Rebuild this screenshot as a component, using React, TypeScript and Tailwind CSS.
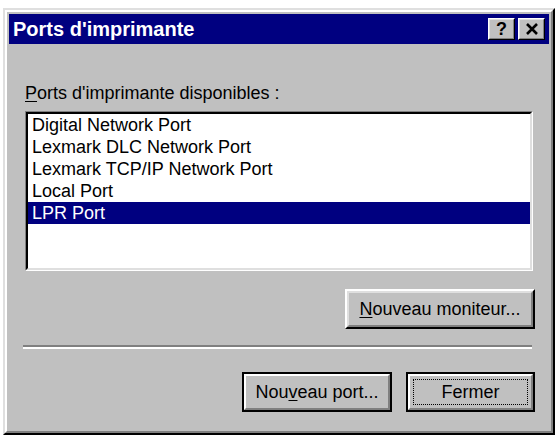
import React from 'react';

const ports = [
  'Digital Network Port',
  'Lexmark DLC Network Port',
  'Lexmark TCP/IP Network Port',
  'Local Port',
  'LPR Port',
];

function TitleButton({ children }: { children: React.ReactNode }) {
  return (
    <div className="w-[27px] h-[22px] bg-[#c0c0c0] border border-t-white border-l-white border-r-black border-b-black">
      <div className="w-full h-full border border-t-[#dfdfdf] border-l-[#dfdfdf] border-r-[#808080] border-b-[#808080] flex items-center justify-center">
        {children}
      </div>
    </div>
  );
}

function Button({
  children,
  width,
  dark,
  focus,
}: {
  children: React.ReactNode;
  width: string;
  dark?: boolean;
  focus?: boolean;
}) {
  const outer = dark
    ? 'border-2 border-black'
    : 'border-2 border-t-white border-l-white border-r-black border-b-black';
  const inner = dark
    ? 'border-2 border-t-white border-l-white border-r-[#808080] border-b-[#808080]'
    : 'border-2 border-t-[#dfdfdf] border-l-[#dfdfdf] border-r-[#808080] border-b-[#808080]';
  return (
    <div className={`${width} h-[40px] bg-[#c0c0c0] ${outer}`}>
      <div className={`w-full h-full ${inner} p-[3px]`}>
        <div
          className={`w-full h-full flex items-center justify-center text-[18px] text-black ${
            focus ? 'border border-dotted border-black' : 'border border-transparent'
          }`}
        >
          {children}
        </div>
      </div>
    </div>
  );
}

export default function App() {
  return (
    <div className="w-[559px] h-[440px] bg-white pt-[8px] pl-[3px] font-['Liberation_Sans',Arial,sans-serif]">
      <div className="w-[552px] h-[427px] bg-[#c0c0c0] border-2 border-t-[#dfdfdf] border-l-[#dfdfdf] border-r-black border-b-black">
        <div className="w-full h-full border-2 border-t-white border-l-white border-r-[#808080] border-b-[#808080] flex flex-col">
          <div className="mx-[2px] mt-[2px] h-[30px] bg-[#000080] flex items-center justify-between pl-[4px] pr-[4px]">
            <span className="text-white font-bold text-[20px] leading-none">Ports d'imprimante</span>
            <div className="flex gap-[3px]">
              <TitleButton>
                <span className="text-black font-bold text-[18px] leading-none">?</span>
              </TitleButton>
              <TitleButton>
                <svg width="14" height="12" viewBox="0 0 14 12">
                  <path d="M2 1 L12 11 M12 1 L2 11" stroke="black" strokeWidth="2.6" />
                </svg>
              </TitleButton>
            </div>
          </div>

          <div className="flex flex-col pl-[18px] pr-[16px] pt-[38px] text-[18px] leading-[22px] text-black">
            <div>
              <span className="underline underline-offset-2">P</span>orts d'imprimante disponibles :
            </div>

            <div className="mt-[7px] w-[508px] h-[160px] border border-t-[#808080] border-l-[#808080] border-r-white border-b-white">
              <div className="w-full h-full bg-white border-2 border-t-black border-l-black border-r-[#dfdfdf] border-b-[#dfdfdf]">
                {ports.map((p, i) => (
                  <div
                    key={p}
                    className={`h-[22px] pl-[4px] ${
                      i === ports.length - 1 ? 'bg-[#000080] text-white' : 'text-black'
                    }`}
                  >
                    {p}
                  </div>
                ))}
              </div>
            </div>

            <div className="mt-[18px] flex justify-end">
              <Button width="w-[190px]">
                <span>
                  <span className="underline underline-offset-2">N</span>ouveau moniteur...
                </span>
              </Button>
            </div>

            <div className="mt-[16px] -ml-[2px] w-[509px] border-t-2 border-t-[#808080] border-b-2 border-b-white" />

            <div className="mt-[23px] flex justify-end gap-[14px]">
              <Button width="w-[150px]" dark>
                <span>
                  Nou<span className="underline underline-offset-2">v</span>eau port...
                </span>
              </Button>
              <Button width="w-[129px]" dark focus>
                Fermer
              </Button>
            </div>
          </div>
        </div>
      </div>
    </div>
  );
}
